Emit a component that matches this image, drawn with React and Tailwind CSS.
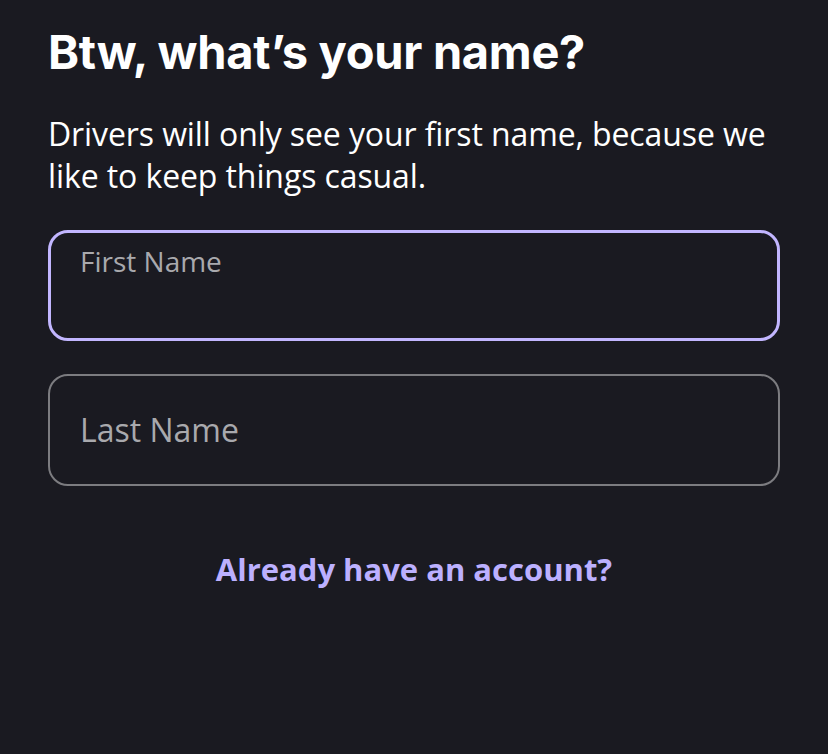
export default function App() {
  return (
    <div className="w-[828px] h-[754px] bg-[#1a1a21] overflow-hidden" style={{ fontFamily: "'Open Sans', Lato, sans-serif" }}>
      <div className="px-[48px] pt-[23px]">
        <h1 className="text-[47px] leading-[58px] font-bold text-white tracking-[-0.3px]" style={{ fontFamily: "Inter, sans-serif" }}>
          Btw, what’s your name?
        </h1>
        <p className="mt-[32px] text-[32px] leading-[42px] text-white tracking-[-0.1px]">
          Drivers will only see your first name, because we like to keep things casual.
        </p>
        <div className="mt-[33px] h-[111px] rounded-[20px] border-[3px] border-[#c2b6ff] px-[29px] pt-[12px]">
          <div className="text-[28px] leading-[32px] text-[#a9a9ad]">First Name</div>
        </div>
        <div className="mt-[33px] h-[112px] rounded-[20px] border-2 border-[#7c7c80] px-[30px] flex items-center">
          <div className="text-[32px] leading-[36px] text-[#a9a9ad]">Last Name</div>
        </div>
        <div className="mt-[63px] text-center text-[31px] leading-[40px] font-bold text-[#bcb0ff]">
          Already have an account?
        </div>
      </div>
    </div>
  );
}
